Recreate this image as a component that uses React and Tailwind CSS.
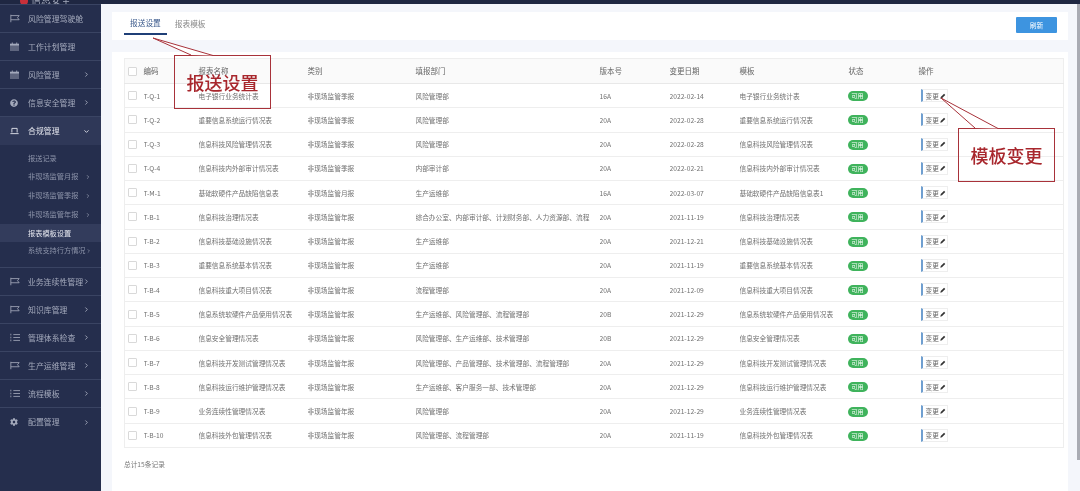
import React from "react";
import { ChevronRight, ChevronDown } from "lucide-react";
import { FaCog, FaQuestionCircle } from "react-icons/fa";

const FlagIcon = () => (
  <svg viewBox="0 0 12 10" className="w-[10px] h-[9px]" fill="none" stroke="currentColor" strokeWidth="1">
    <path d="M1 0.5V9.5M1 1.5H11L9 4L11 6.5H1" />
  </svg>
);
const CalendarIcon = () => (
  <svg viewBox="0 0 10 10" className="w-[9px] h-[9px]" fill="currentColor">
    <path d="M0 2h10v8H0z" opacity="0.45" />
    <path d="M0 2h10v2H0zM2 0.5h1v2H2zM7 0.5h1v2H7z" />
  </svg>
);
const LaptopIcon = () => (
  <svg viewBox="0 0 12 10" className="w-[9px] h-[8px]" fill="none" stroke="currentColor" strokeWidth="1.2">
    <path d="M2.5 7V1.5H9.5V7M0.5 8.5H11.5" />
  </svg>
);
const ListIcon = () => (
  <svg viewBox="0 0 12 10" className="w-[10px] h-[9px]" fill="none" stroke="currentColor" strokeWidth="1">
    <path d="M4 1.5H12M4 5H12M4 8.5H12M1 0.5V2.5M1 4V6M1 7.5V9.5" />
  </svg>
);
const PenIcon = () => (
  <svg viewBox="0 0 10 10" className="w-[6px] h-[6px]" fill="#333">
    <path d="M0.5 9.5L1.2 6.8L6.8 1.2L8.8 3.2L3.2 8.8Z" />
  </svg>
);

const menuTop = [
  { label: "风险管理驾驶舱", icon: <FlagIcon /> },
  { label: "工作计划管理", icon: <CalendarIcon /> },
  { label: "风险管理", icon: <CalendarIcon />, arrow: true },
  { label: "信息安全管理", icon: <FaQuestionCircle size={8} />, arrow: true },
];
const subMenu = [
  { label: "报送记录", h: "h-[18px]" },
  { label: "非现场监管月报", h: "h-[19px]", arrow: true },
  { label: "非现场监管季报", h: "h-[19px]", arrow: true },
  { label: "非现场监管年报", h: "h-[19px]", arrow: true },
  { label: "报表模板设置", h: "h-[18px]", active: true },
  { label: "系统支持行方情况", h: "h-[17px]", arrow: true },
];
const menuBottom = [
  { label: "业务连续性管理", icon: <FlagIcon />, arrow: true },
  { label: "知识库管理", icon: <FlagIcon />, arrow: true },
  { label: "管理体系检查", icon: <ListIcon />, arrow: true },
  { label: "生产运维管理", icon: <FlagIcon />, arrow: true },
  { label: "流程模板", icon: <ListIcon />, arrow: true },
  { label: "配置管理", icon: <FaCog size={8} />, arrow: true, last: true },
];

const J = "非现场监管季报";
const N = "非现场监管年报";
const rows = [
  ["T-Q-1", "电子银行业务统计表", J, "风险管理部", "16A", "2022-02-14", "电子银行业务统计表"],
  ["T-Q-2", "重要信息系统运行情况表", J, "风险管理部", "20A", "2022-02-28", "重要信息系统运行情况表"],
  ["T-Q-3", "信息科技风险管理情况表", J, "风险管理部", "20A", "2022-02-28", "信息科技风险管理情况表"],
  ["T-Q-4", "信息科技内外部审计情况表", J, "内部审计部", "20A", "2022-02-21", "信息科技内外部审计情况表"],
  ["T-M-1", "基础软硬件产品缺陷信息表", "非现场监管月报", "生产运维部", "16A", "2022-03-07", "基础软硬件产品缺陷信息表1"],
  ["T-B-1", "信息科技治理情况表", N, "综合办公室、内部审计部、计划财务部、人力资源部、流程", "20A", "2021-11-19", "信息科技治理情况表"],
  ["T-B-2", "信息科技基础设施情况表", N, "生产运维部", "20A", "2021-12-21", "信息科技基础设施情况表"],
  ["T-B-3", "重要信息系统基本情况表", N, "生产运维部", "20A", "2021-11-19", "重要信息系统基本情况表"],
  ["T-B-4", "信息科技重大项目情况表", N, "流程管理部", "20A", "2021-12-09", "信息科技重大项目情况表"],
  ["T-B-5", "信息系统软硬件产品使用情况表", N, "生产运维部、风险管理部、流程管理部", "20B", "2021-12-29", "信息系统软硬件产品使用情况表"],
  ["T-B-6", "信息安全管理情况表", N, "风险管理部、生产运维部、技术管理部", "20B", "2021-12-29", "信息安全管理情况表"],
  ["T-B-7", "信息科技开发测试管理情况表", N, "风险管理部、产品管理部、技术管理部、流程管理部", "20A", "2021-12-29", "信息科技开发测试管理情况表"],
  ["T-B-8", "信息科技运行维护管理情况表", N, "生产运维部、客户服务一部、技术管理部", "20A", "2021-12-29", "信息科技运行维护管理情况表"],
  ["T-B-9", "业务连续性管理情况表", N, "风险管理部", "20A", "2021-12-29", "业务连续性管理情况表"],
  ["T-B-10", "信息科技外包管理情况表", N, "风险管理部、流程管理部", "20A", "2021-11-19", "信息科技外包管理情况表"],
];

const font = "font-['Noto_Sans_CJK_SC','Liberation_Sans',sans-serif]";

const MenuItem = ({ item }) => (
  <div className={`h-[28px] flex items-center pl-[10px] pr-[11px] text-[#a3a9bb] text-[7.9px] ${item.last ? "" : "border-b border-[#3a4463]"}`}>
    <span className="w-[18px] flex items-center">{item.icon}</span>
    <span className="flex-1 whitespace-nowrap">{item.label}</span>
    {item.arrow && <ChevronRight size={7} strokeWidth={3} />}
  </div>
);

const Checkbox = () => <span className="block w-[9px] h-[9px] border border-[#d9d9d9] rounded-[1px] bg-white" />;

// 标注框：框体透明，下面的表格文字会透出来
const Callout = ({ text, box, tail }) => (
  <>
    <div className={`absolute ${box} border border-[#a8323a] flex items-center justify-center text-[#a8272d] text-[18px] font-medium whitespace-nowrap`}>
      {text}
    </div>
    <svg className="absolute left-0 top-0 w-[1080px] h-[491px] pointer-events-none" viewBox="0 0 1080 491">
      <path d={tail} fill="#fff" stroke="#a8323a" strokeWidth="1" />
    </svg>
  </>
);

export default function App() {
  return (
    <div className={`relative w-[1080px] h-[491px] overflow-hidden flex flex-col bg-[#f4f6fb] blur-[0.4px] ${font}`}>
      <div className="h-[4px] bg-[#1f2742] shrink-0 overflow-hidden flex items-end pl-[20px] gap-[3px]">
        <span className="block w-[8px] h-[8px] -mb-[1px] rounded-full bg-[#c8303a] shrink-0" />
        <span className="text-[10px] leading-none -mb-[1px] text-[#a3a9bb] whitespace-nowrap">信息安全</span>
      </div>
      <div className="flex flex-1 min-h-0">
        <aside className="w-[101px] shrink-0 bg-[#252e4d] border-t border-[#3a4463]">
          {menuTop.map((item) => <MenuItem key={item.label} item={item} />)}
          <div className="h-[28px] flex items-center bg-[#2f3858] pl-[10px] pr-[11px] text-[#e4e6ee] text-[7.9px]">
            <span className="w-[18px] flex items-center"><LaptopIcon /></span>
            <span className="flex-1">合规管理</span>
            <ChevronDown size={7} strokeWidth={3} />
          </div>
          <div className="border-b border-[#3a4463] pt-[4px] pb-[8px]">
            {subMenu.map((s) => (
              <div
                key={s.label}
                className={`${s.h} flex items-center pl-[28px] pr-[10px] text-[7.2px] whitespace-nowrap ${s.active ? "bg-[#333c5c] text-[#e4e6ee]" : "text-[#8d94aa]"}`}
              >
                <span className="flex-1">{s.label}</span>
                {s.arrow && <ChevronRight size={6} strokeWidth={3} />}
              </div>
            ))}
          </div>
          {menuBottom.map((item) => <MenuItem key={item.label} item={item} />)}
        </aside>

        <main className="flex-1 min-w-0 pl-[11px] pr-[9px] pt-[8px] flex flex-col gap-[12px]">
          <div className="h-[28px] bg-white flex items-start pl-[12px] pr-[11px] shrink-0">
            <div className="h-[23px] flex items-center border-b-2 border-[#1f3f77] px-[6px] text-[7.7px] text-[#3b5a8c]">报送设置</div>
            <div className="h-[23px] flex items-center ml-[8px] text-[7.7px] text-[#8a8a8a]">报表模板</div>
            <div className="ml-auto mt-[5px] w-[41px] h-[16px] bg-[#3d94e0] rounded-[1px] text-white text-[6.8px] flex items-center justify-center">刷新</div>
          </div>

          <div className="flex-1 bg-white pl-[12px] pt-[6px]">
            <table className="w-[939px] table-fixed border-collapse border border-[#eeeeee] text-[6.7px] text-[#707070]">
              <colgroup>
                <col className="w-[19px]" />
                <col className="w-[55px]" />
                <col className="w-[109px]" />
                <col className="w-[108px]" />
                <col className="w-[184px]" />
                <col className="w-[70px]" />
                <col className="w-[70px]" />
                <col className="w-[109px]" />
                <col className="w-[70px]" />
                <col className="w-[145px]" />
              </colgroup>
              <thead>
                <tr className="h-[25px] bg-[#fafafa] border-b border-[#e8e8e8] text-[7.5px] text-[#666666]">
                  <th className="pl-[3px] font-normal text-left"><Checkbox /></th>
                  {["编码", "报表名称", "类别", "填报部门", "版本号", "变更日期", "模板", "状态", "操作"].map((h) => (
                    <th key={h} className="font-normal text-left">{h}</th>
                  ))}
                </tr>
              </thead>
              <tbody>
                {rows.map((r) => (
                  <tr key={r[0]} className="h-[24.28px] border-b border-[#eeeeee]">
                    <td className="pl-[3px]"><Checkbox /></td>
                    {r.map((c, i) => (
                      <td key={i} className="whitespace-nowrap overflow-hidden">{c}</td>
                    ))}
                    <td>
                      <span className="inline-flex items-center justify-center w-[20px] h-[10px] -ml-[1px] rounded-full bg-[#3fb35c] text-white text-[6px] leading-none">可用</span>
                    </td>
                    <td>
                      <span className="inline-flex items-center gap-[1px] w-[27px] h-[13px] ml-[2px] pl-[3px] border border-[#eeeeee] border-l-[#6f9fd0] border-l-2 text-[6.7px] text-[#666666]">
                        变更<PenIcon />
                      </span>
                    </td>
                  </tr>
                ))}
              </tbody>
            </table>
            <div className="mt-[11px] text-[6.7px] text-[#777777]">总计15条记录</div>
          </div>
        </main>

        <div className="w-[3px] bg-[#a9abb3] h-[456px] shrink-0" />
      </div>

      <Callout text="报送设置" box="left-[174px] top-[55px] w-[97px] h-[54px]" tail="M191 55L153 38L213 55.5" />
      <Callout text="模板变更" box="left-[958px] top-[128px] w-[97px] h-[54px]" tail="M975 128L941 98L998 128.5" />
    </div>
  );
}
